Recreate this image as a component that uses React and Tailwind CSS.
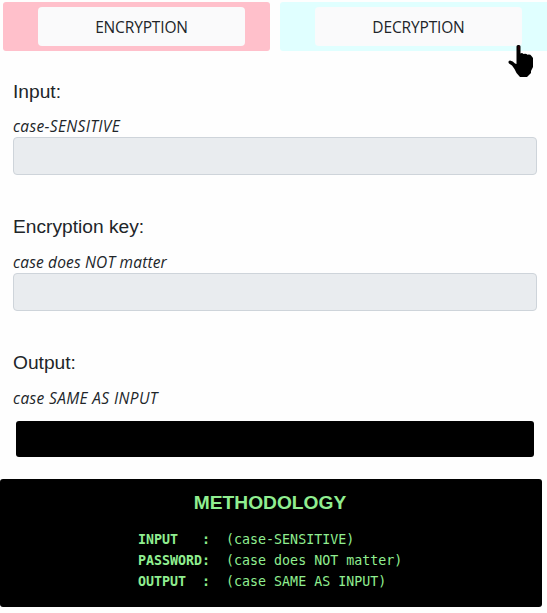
function ModeTab({ label, className }) {
  return (
    <div className={`flex h-[49px] w-[267px] shrink-0 pl-[35px] pt-[5px] ${className}`}>
      <button className="h-[39px] w-[207px] cursor-pointer rounded bg-[#fafafb] pt-[3px] font-['Open_Sans',sans-serif] text-[15.5px] tracking-[-0.15px] text-[#212529]">
        {label}
      </button>
    </div>
  );
}

function FieldLabel({ title, hint, titleClass = "", hintClass = "" }) {
  return (
    <>
      <h2 className={`w-fit whitespace-nowrap font-['Liberation_Sans',sans-serif] text-[19.2px] leading-6 text-[#212529] ${titleClass}`}>{title}</h2>
      <p className={`mt-[11px] h-6 w-fit whitespace-nowrap font-['Open_Sans',sans-serif] text-[15.5px] italic leading-6 text-[#212529] ${hintClass}`}>{hint}</p>
    </>
  );
}

function Field(props) {
  return (
    <section className="h-[136px] px-[13px]">
      <FieldLabel {...props} />
      <input readOnly aria-label={props.title} className="-mt-px block h-[38px] w-[524px] rounded border border-[#ced4da] bg-[#e9ecef] px-3" />
    </section>
  );
}

function HandCursor() {
  return (
    <svg className="absolute left-[508px] top-[45px]" width="25" height="32" viewBox="0 0 25 32">
      <path fill="#000" d="M8.5 1.5Q8.5 0 10 0H11Q12.5 0 12.5 1.5V8.5Q14 7.5 15.5 9Q18 8 19.5 9.8Q22 9 23.5 11L25 13V22L23 26V28L19 32H12L8.5 28L6.5 24L4 20.5L1 18.5Q-0.5 16 2 15.5Q5 16 7 18.5L8.5 19Z" />
      <path fill="#200004" d="M10 1H12V5H10Z" />
    </svg>
  );
}

const rows = [
  ["INPUT   ", ":", "(case-SENSITIVE)"],
  ["PASSWORD", ":", "(case does NOT matter)"],
  ["OUTPUT  ", ":", "(case SAME AS INPUT)"],
];

export default function App() {
  return (
    <main className="relative h-[613px] w-[547px] overflow-hidden bg-[#fefefe]">
      <nav className="flex gap-[10px] pl-[3px] pt-[2px]">
        <ModeTab label="ENCRYPTION" className="rounded-[3px] bg-[#ffc0cb]" />
        <ModeTab label="DECRYPTION" className="rounded-l-[3px] bg-[#e0ffff]" />
      </nav>
      <div className="pt-[28px]">
        <Field title="Input:" hint="case-SENSITIVE" titleClass="relative top-px" hintClass="tracking-[0.34px]" />
        <Field title="Encryption key:" hint="case does NOT matter" hintClass="tracking-[0.17px]" />
        <section className="px-[13px]">
          <FieldLabel title="Output:" hint="case SAME AS INPUT" hintClass="tracking-[0.36px]" />
          <div className="ml-[3px] mt-[11px] h-9 w-[518px] rounded-[3px] bg-black" />
        </section>
      </div>
      <section className="mt-[22px] h-[128px] w-[542px] rounded-[3px] bg-black pt-[12px] text-[#90ee90]">
        <h2 className="pr-[2px] text-center font-['Liberation_Sans',sans-serif] text-[19.2px] font-bold leading-6">METHODOLOGY</h2>
        <div className="ml-[138px] mt-[14px] whitespace-pre font-['DejaVu_Sans_Mono',monospace] text-[13.3px] leading-[21px]">
          {rows.map(([name, colon, value]) => (
            <div key={name}>
              <b>{name}{colon}</b>{"  "}{value}
            </div>
          ))}
        </div>
      </section>
      <HandCursor />
    </main>
  );
}
